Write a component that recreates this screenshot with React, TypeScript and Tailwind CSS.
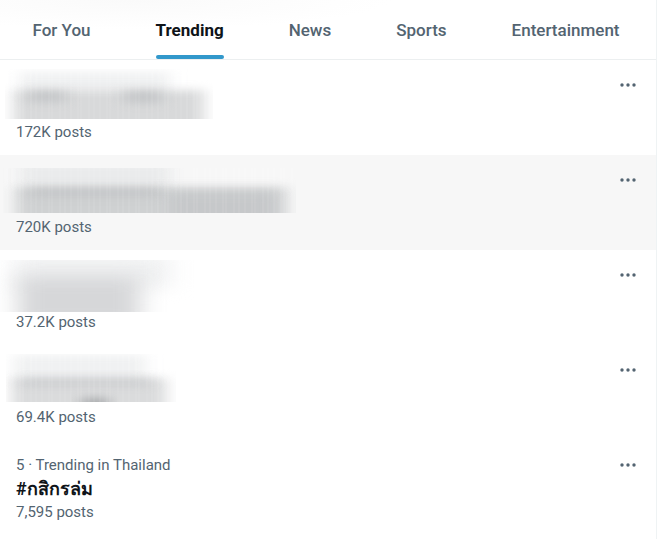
import { useId } from "react";

type Smudge = { x: number; y: number; w: number; h: number; fill: string };
type Redaction = { left: number; top: number; bottom: number; right: number; soft: string; streaks: boolean; bars: Smudge[] };
type Trend = { id: string; posts: string; context?: string; title?: string; hidden?: Redaction; active?: boolean };

const tabs = ["For You", "Trending", "News", "Sports", "Entertainment"];

const trends: Trend[] = [
  {
    id: "1",
    posts: "172K posts",
    hidden: {
      left: 5, top: 9, bottom: 59, right: 213, soft: "8 4", streaks: true,
      bars: [
        { x: 20, y: 12, w: 150, h: 22, fill: "#f0f1f2" },
        { x: 14, y: 30, w: 190, h: 44, fill: "#d8d9da" },
        { x: 28, y: 31, w: 38, h: 11, fill: "#c4c6c8" },
        { x: 124, y: 31, w: 38, h: 12, fill: "#c4c6c8" },
      ],
    },
  },
  {
    id: "2",
    posts: "720K posts",
    active: true,
    hidden: {
      left: 3, top: 13, bottom: 58, right: 296, soft: "8 4", streaks: true,
      bars: [
        { x: 20, y: 8, w: 150, h: 24, fill: "#eaebec" },
        { x: 16, y: 32, w: 270, h: 42, fill: "#cfd1d2" },
        { x: 28, y: 33, w: 134, h: 8, fill: "#c2c4c6" },
        { x: 170, y: 38, w: 104, h: 36, fill: "#c6c8ca" },
      ],
    },
  },
  {
    id: "3",
    posts: "37.2K posts",
    hidden: {
      left: 0, top: 10, bottom: 62, right: 194, soft: "12 8", streaks: false,
      bars: [
        { x: 14, y: 4, w: 156, h: 34, fill: "#f0f1f2" },
        { x: 18, y: 26, w: 122, h: 50, fill: "#d6d7d9" },
      ],
    },
  },
  {
    id: "4",
    posts: "69.4K posts",
    hidden: {
      left: 6, top: 9, bottom: 57, right: 176, soft: "8 4", streaks: true,
      bars: [
        { x: 14, y: 10, w: 132, h: 24, fill: "#f0f1f2" },
        { x: 12, y: 33, w: 154, h: 40, fill: "#dadbdc" },
        { x: 20, y: 34, w: 130, h: 6, fill: "#c6c8ca" },
        { x: 82, y: 53, w: 26, h: 16, fill: "#a6a8aa" },
      ],
    },
  },
  { id: "5", context: "5 · Trending in Thailand", title: "#กสิกรล่ม", posts: "7,595 posts" },
];

function HiddenText({ area }: { area: Redaction }) {
  const id = useId();
  return (
    <svg aria-hidden="true" width="300" height="62" className="-ml-4 block overflow-visible">
      <defs>
        <clipPath id={`${id}c`}>
          <rect x={area.left} y={area.top} width={area.right - area.left} height={area.bottom - area.top} />
        </clipPath>
        <filter id={`${id}b`} x="-40%" y="-150%" width="180%" height="400%" colorInterpolationFilters="sRGB">
          <feGaussianBlur stdDeviation={area.soft} />
        </filter>
        <pattern id={`${id}p`} width="29" height="60" patternUnits="userSpaceOnUse">
          <path d="M2 0V60M7 0V60M13 0V60M20 0V60M23 0V60" stroke="#fff" strokeOpacity="0.12" />
        </pattern>
      </defs>
      <g clipPath={`url(#${id}c)`}>
        {area.bars.map((b, i) => (
          <rect key={i} x={b.x} y={b.y} width={b.w} height={b.h} fill={b.fill} filter={`url(#${id}b)`} />
        ))}
        {area.streaks && <rect width={area.right} height="60" fill={`url(#${id}p)`} />}
      </g>
    </svg>
  );
}

function MoreButton() {
  return (
    <button type="button" aria-label="More" className="mt-[15px] h-5 w-5 shrink-0 text-[#536471]">
      <svg viewBox="0 0 20 20" width="20" height="20" fill="currentColor">
        <circle cx="4" cy="10" r="1.7" />
        <circle cx="10" cy="10" r="1.7" />
        <circle cx="16" cy="10" r="1.7" />
      </svg>
    </button>
  );
}

export default function App() {
  return (
    <div className="bg-white pr-[9px] font-['Roboto','Noto_Sans',sans-serif] text-[#536471]">
      <main className="min-h-screen border-r border-[#eff3f4]">
        <nav className="flex border-b border-[#eceff0] bg-[radial-gradient(ellipse_at_20%_0%,#fafafa_0%,#ffffff_35%)] pr-1">
          {tabs.map((tab) => (
            <button
              key={tab}
              type="button"
              aria-current={tab === "Trending" ? "page" : undefined}
              className="flex flex-auto justify-center text-[17px] leading-5 font-medium aria-[current=page]:font-bold aria-[current=page]:text-[#0f1419]"
            >
              <span className="flex flex-col">
                <span className="pt-5 pb-[15px]">{tab}</span>
                <span className={tab === "Trending" ? "h-1 rounded-full bg-[#3298cb]" : "h-1"} />
              </span>
            </button>
          ))}
        </nav>
        <ul>
          {trends.map((t) => (
            <li
              key={t.id}
              className={
                t.active
                  ? "flex items-start justify-between bg-[#f7f7f7] pr-[18px] pl-4"
                  : "flex items-start justify-between pr-[18px] pl-4"
              }
            >
              <div className="min-w-0 pb-[13px] text-[15px] leading-5">
                {t.hidden ? (
                  <HiddenText area={t.hidden} />
                ) : (
                  <>
                    <p className="pt-[15px]">{t.context}</p>
                    <h2 className="text-[18px] leading-[27px] font-bold text-[#0f1419]">{t.title}</h2>
                  </>
                )}
                <p>{t.posts}</p>
              </div>
              <MoreButton />
            </li>
          ))}
        </ul>
      </main>
    </div>
  );
}
